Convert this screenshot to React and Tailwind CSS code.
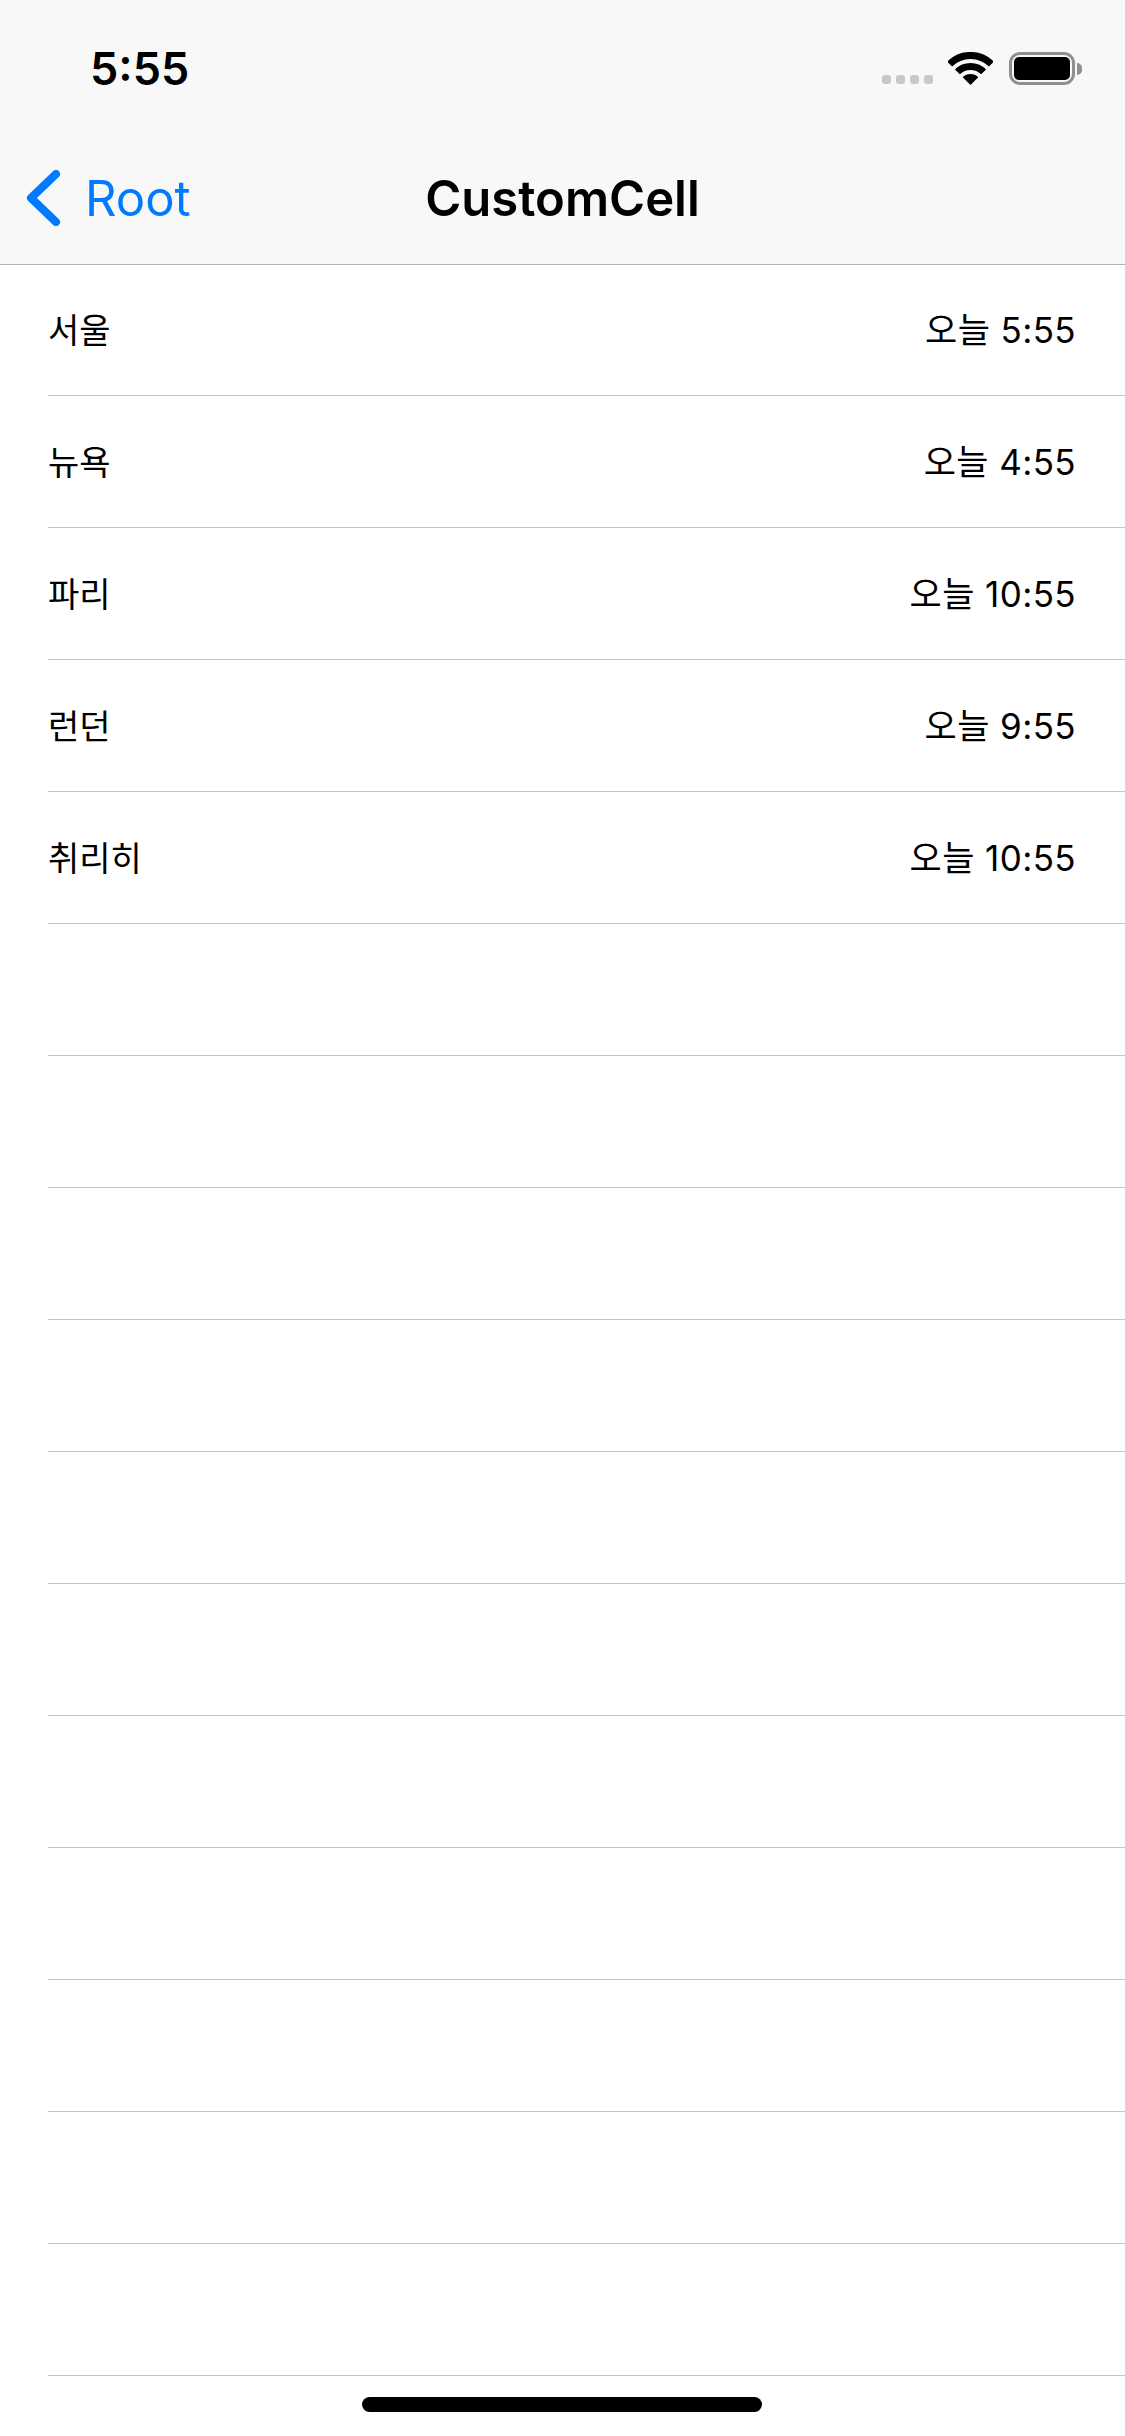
const ciudades = [
  { nombre: '서울', hora: '오늘 5:55' },
  { nombre: '뉴욕', hora: '오늘 4:55' },
  { nombre: '파리', hora: '오늘 10:55' },
  { nombre: '런던', hora: '오늘 9:55' },
  { nombre: '취리히', hora: '오늘 10:55' },
];

const filasVacias = Array.from({ length: 11 }, (_, i) => i);

const fuente = "font-['Inter','Noto_Sans_CJK_KR',sans-serif]";

function Wifi() {
  return (
    <svg width="45" height="33" viewBox="0 0 45 33" fill="none">
      <path d="M22.5 33 L14.7 25.2 A11 11 0 0 1 30.3 25.2 Z" fill="#000" />
      <path d="M9.4 19.9 A18.5 18.5 0 0 1 35.6 19.9" stroke="#000" strokeWidth="7" />
      <path d="M1.6 12.1 A29.5 29.5 0 0 1 43.4 12.1" stroke="#000" strokeWidth="7" />
    </svg>
  );
}

function Bateria() {
  return (
    <div className="flex items-center">
      <div className="h-[33px] w-[66px] rounded-[11px] border-[3px] border-[#8f8f8f] p-[2px]">
        <div className="h-full w-full rounded-[5px] bg-black" />
      </div>
      <div className="ml-[2px] h-[12px] w-[5px] rounded-r-[5px] bg-[#8f8f8f]" />
    </div>
  );
}

function SenalInactiva() {
  return (
    <div className="flex gap-[5px] self-end pb-px">
      <span className="h-[9px] w-[9px] rounded-[3px] bg-[#c8c8c8]" />
      <span className="h-[9px] w-[9px] rounded-[3px] bg-[#c8c8c8]" />
      <span className="h-[9px] w-[9px] rounded-[3px] bg-[#c8c8c8]" />
      <span className="h-[9px] w-[9px] rounded-[3px] bg-[#c8c8c8]" />
    </div>
  );
}

function Fila({ nombre, hora }) {
  return (
    <div className="h-[132px] pl-12">
      <div className="flex h-full items-center justify-between border-b border-[#c4c4c6] pt-px pr-[49px] text-black">
        <span className="text-[34px]">{nombre}</span>
        <span className="text-[35px] tracking-[0.4px]">{hora}</span>
      </div>
    </div>
  );
}

export default function App() {
  return (
    <div className={`relative h-[2436px] w-[1125px] overflow-hidden bg-white ${fuente}`}>
      <header className="relative z-10 border-b border-[#b2b2b2] bg-[#f8f8f8]">
        <div className="flex h-[132px] items-start justify-between pt-[52px] pr-[43px] pl-[90px]">
          <span className="text-[45px] leading-[33px] font-semibold text-black">5:55</span>
          <div className="flex h-[33px] items-center">
            <SenalInactiva />
            <div className="mr-4 ml-[15px]">
              <Wifi />
            </div>
            <Bateria />
          </div>
        </div>
        <div className="relative flex h-[132px] items-center justify-center">
          <div className="absolute top-[38px] left-[25px] flex items-center text-[#007aff]">
            <svg width="36" height="56" viewBox="0 0 36 56" fill="none">
              <path d="M31 4 L6 28 L31 52" stroke="#007aff" strokeWidth="8" strokeLinecap="round" strokeLinejoin="round" />
            </svg>
            <span className="ml-[24px] text-[49px] leading-none">Root</span>
          </div>
          <h1 className="text-[49px] leading-none font-semibold text-black">CustomCell</h1>
        </div>
      </header>

      <main className="-mt-px">
        {ciudades.map((c) => (
          <Fila key={c.nombre} nombre={c.nombre} hora={c.hora} />
        ))}
        {filasVacias.map((i) => (
          <Fila key={i} />
        ))}
      </main>

      <div className="absolute bottom-6 left-[362px] h-[15px] w-[400px] rounded-full bg-black" />
    </div>
  );
}
